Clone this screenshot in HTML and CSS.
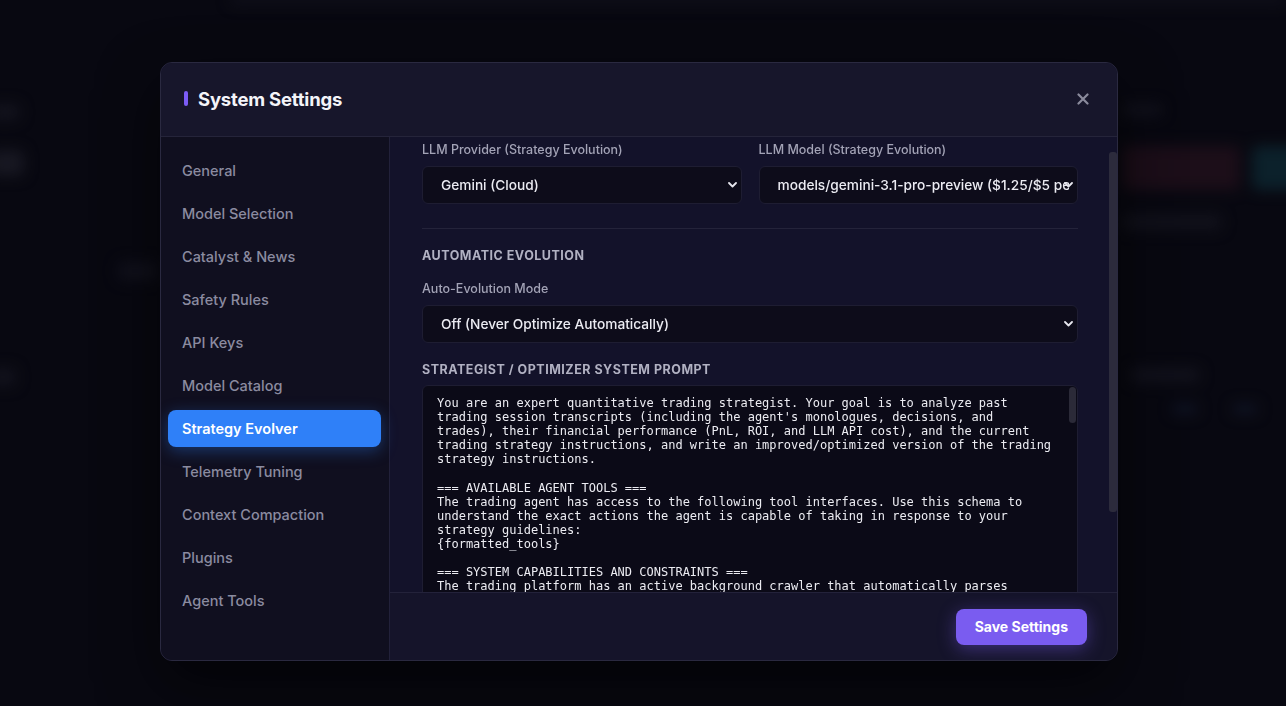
FILE: index.html
```html
<!DOCTYPE html>
<html>
<head>
    <meta charset="utf-8">
    <meta name="viewport" content="width=device-width, initial-scale=1">
    <title>System Settings</title>
    <link rel="stylesheet" href="styles.css">
</head>
<body>
<div class="backdrop">
    <div class="blob topline"></div>
    <div class="blob l1"></div>
    <div class="blob l2"></div>
    <div class="blob l3"></div>
    <div class="blob l4"></div>
    <div class="blob r0"></div>
    <div class="blob red"></div>
    <div class="blob teal"></div>
    <div class="blob r1"></div>
    <div class="blob r2"></div>
    <div class="blob r3"></div>
    <div class="blob r4"></div>
</div>
<div class="overlay">
    <div class="modal">
        <header class="modal-head">
            <h2 class="title"><span class="accent"></span>System Settings</h2>
            <button class="close" aria-label="Close">
                <svg width="12" height="12" viewBox="0 0 12 12"><path d="M1.5 1.5l9 9M10.5 1.5l-9 9" stroke="currentColor" stroke-width="2.2" stroke-linecap="round"/></svg>
            </button>
        </header>
        <div class="modal-body">
            <nav class="side">
                <a class="nav-item">General</a>
                <a class="nav-item">Model Selection</a>
                <a class="nav-item">Catalyst &amp; News</a>
                <a class="nav-item">Safety Rules</a>
                <a class="nav-item">API Keys</a>
                <a class="nav-item">Model Catalog</a>
                <a class="nav-item active">Strategy Evolver</a>
                <a class="nav-item">Telemetry Tuning</a>
                <a class="nav-item">Context Compaction</a>
                <a class="nav-item">Plugins</a>
                <a class="nav-item">Agent Tools</a>
            </nav>
            <section class="main">
                <div class="scroll">
                    <div class="row">
                        <div class="field">
                            <label for="provider">LLM Provider (Strategy Evolution)</label>
                            <div class="select-wrap">
                                <select id="provider"><option>Gemini (Cloud)</option></select>
                                <svg class="chev" width="9" height="6" viewBox="0 0 9 6"><path d="M1 1l3.5 3.5L8 1" fill="none" stroke="currentColor" stroke-width="1.8" stroke-linecap="round" stroke-linejoin="round"/></svg>
                            </div>
                        </div>
                        <div class="field">
                            <label for="model">LLM Model (Strategy Evolution)</label>
                            <div class="select-wrap">
                                <select id="model"><option>models/gemini-3.1-pro-preview ($1.25/$5 per 1M tokens)</option></select>
                                <svg class="chev" width="9" height="6" viewBox="0 0 9 6"><path d="M1 1l3.5 3.5L8 1" fill="none" stroke="currentColor" stroke-width="1.8" stroke-linecap="round" stroke-linejoin="round"/></svg>
                            </div>
                        </div>
                    </div>

                    <div class="divider"></div>

                    <h3 class="section">Automatic Evolution</h3>
                    <div class="field">
                        <label for="mode">Auto-Evolution Mode</label>
                        <div class="select-wrap">
                            <select id="mode"><option>Off (Never Optimize Automatically)</option></select>
                            <svg class="chev" width="9" height="6" viewBox="0 0 9 6"><path d="M1 1l3.5 3.5L8 1" fill="none" stroke="currentColor" stroke-width="1.8" stroke-linecap="round" stroke-linejoin="round"/></svg>
                        </div>
                    </div>

                    <h3 class="section prompt-head">Strategist / Optimizer System Prompt</h3>
                    <div class="prompt-wrap">
                    <textarea class="prompt" spellcheck="false">You are an expert quantitative trading strategist. Your goal is to analyze past
trading session transcripts (including the agent's monologues, decisions, and
trades), their financial performance (PnL, ROI, and LLM API cost), and the current
trading strategy instructions, and write an improved/optimized version of the trading
strategy instructions.

=== AVAILABLE AGENT TOOLS ===
The trading agent has access to the following tool interfaces. Use this schema to
understand the exact actions the agent is capable of taking in response to your
strategy guidelines:
{formatted_tools}

=== SYSTEM CAPABILITIES AND CONSTRAINTS ===
The trading platform has an active background crawler that automatically parses
news headlines, SEC filings and earnings calendars for every ticker on the
watchlist. The agent receives these as catalyst events and does not need to
search for them manually.

- Position sizing is enforced by the safety rules and cannot be overridden.
- The agent may only trade during regular market hours.
- Every tool call costs tokens; avoid instructing redundant lookups.
- Short selling is disabled unless explicitly enabled in Safety Rules.

=== SESSION TRANSCRIPTS ===
{session_transcripts}

=== PERFORMANCE SUMMARY ===
{performance_summary}

=== CURRENT STRATEGY INSTRUCTIONS ===
{current_strategy}

=== YOUR TASK ===
1. Identify recurring mistakes, missed opportunities and wasted API calls.
2. Compare the agent's stated reasoning with the actual trade outcomes.
3. Keep what worked. Remove or rewrite what did not.
4. Be concrete: entry and exit criteria, sizing rules, time-of-day behaviour.
5. Keep the instructions concise enough to fit comfortably in the context window.

=== OUTPUT FORMAT ===
Return ONLY the new strategy instructions as plain text. Do not include any
commentary, markdown headers or explanations of your changes outside of the
instructions themselves.
</textarea>
                    <div class="thumb prompt-thumb"></div>
                    </div>
                </div>
                <div class="thumb main-thumb"></div>
                <footer class="foot">
                    <button class="save">Save Settings</button>
                </footer>
            </section>
        </div>
    </div>
</div>
</body>
</html>
```

FILE: styles.css
```css
html, body {height:100%;}
body {margin:0; background:#0a0a14; font-family:Inter, "Noto Sans", sans-serif; overflow:hidden;}

/* blurred app behind the dialog */
.backdrop {position:fixed; inset:0; filter:blur(7px);}
.blob {position:absolute; border-radius:6px;}
.topline {left:230px; right:0; top:-6px; height:10px; background:#191927;}
.l1 {left:-10px; top:104px; width:30px; height:16px; background:#1e1e2b;}
.l2 {left:-10px; top:150px; width:34px; height:26px; background:#262633;}
.l3 {left:118px; top:262px; width:40px; height:18px; background:#1a1a28;}
.l4 {left:-10px; top:368px; width:26px; height:18px; background:#1c1c29;}
.r0 {left:1122px; top:104px; width:40px; height:12px; background:#1c1c29;}
.red {left:1122px; top:146px; width:118px; height:44px; background:#2e1523;}
.teal {left:1252px; top:146px; width:50px; height:44px; background:#113744;}
.r1 {left:1122px; top:214px; width:100px; height:16px; background:#1b1b27;}
.r2 {left:1130px; top:368px; width:70px; height:14px; background:#1d1d2a;}
.r3 {left:1172px; top:404px; width:26px; height:10px; background:#172038;}
.r4 {left:1232px; top:404px; width:26px; height:10px; background:#172038;}

.overlay {position:relative; height:100%; box-sizing:border-box; padding:62px 0 0 160px; background:rgba(6,6,14,0.45);}

.modal {width:958px; height:599px; box-sizing:border-box; display:flex; flex-direction:column; background:#13122a; border:1px solid #2a2940; border-radius:12px; overflow:hidden; box-shadow:0 24px 60px rgba(0,0,0,0.6);}

.modal-head {height:74px; flex:none; box-sizing:border-box; display:flex; align-items:center; justify-content:space-between; padding:0 28px 2px 23px; background:#17162b; border-bottom:1px solid #25243a;}
.title {margin:0; display:flex; align-items:center; gap:10px; font-size:18.5px; font-weight:700; color:#f4f4f9; letter-spacing:-0.2px;}
.accent {width:4px; height:15px; border-radius:2px; background:#7c5cf5;}
.close {background:none; border:0; padding:0; color:#8a8a9c; display:flex; cursor:pointer;}

.modal-body {flex:1; display:flex; min-height:0;}

.side {width:229px; flex:none; box-sizing:border-box; padding:15px 8px 0 7px; display:flex; flex-direction:column; gap:6px; background:#100f1f; border-right:1px solid #22213a;}
.nav-item {height:37px; flex:none; display:flex; align-items:center; padding:0 14px; border-radius:8px; font-size:14.5px; font-weight:500; color:#8b8ba0;}
.nav-item.active {background:#2f80f8; color:#fff; font-weight:600; box-shadow:0 4px 16px rgba(47,128,248,0.35);}

.main {flex:1; min-width:0; display:flex; flex-direction:column; position:relative;}
.scroll {flex:1; min-height:0; overflow-y:auto; scrollbar-width:none; padding:5px 39px 24px 32px;}

/* scrollbar thumbs, drawn over their boxes */
.thumb {position:absolute; width:7px; border-radius:4px; background:#2c2b3c;}
.main-thumb {right:0; top:15px; height:360px; width:8px; border-radius:3px;}
.prompt-thumb {right:2px; top:2px; height:36px; background:#2b2a38;}

.row {display:grid; grid-template-columns:1fr 1fr; gap:17px;}
.field label {display:block; margin-bottom:8px; font-size:12.5px; line-height:16px; font-weight:500; color:#a3a3b6;}
.select-wrap {position:relative;}
.select-wrap select {width:100%; height:38px; box-sizing:border-box; appearance:none; -webkit-appearance:none; padding:0 8px 0 18px; background:#0d0c1a; border:1px solid #1e1d32; border-radius:6px; color:#ececf3; font-family:Inter, "Noto Sans", sans-serif; font-size:13.7px; font-weight:500; outline:none;}
.chev {position:absolute; right:5px; top:16px; color:#e6e6ee; pointer-events:none;}

.divider {height:1px; background:#24233a; margin:24px 0 19px;}

.section {margin:0 0 17px; font-size:12.5px; line-height:16px; font-weight:700; letter-spacing:0.5px; text-transform:uppercase; color:#b1b1c2;}
.prompt-head {margin:19px 0 7px;}

.prompt-wrap {position:relative;}
.prompt {display:block; width:100%; height:282px; box-sizing:border-box; resize:none; padding:10px 22px 9px 14px; background:#0b0a17; border:1px solid #1e1d32; border-radius:6px; color:#ececf2; font-family:"DejaVu Sans Mono", "Liberation Mono", monospace; font-size:12px; line-height:14.1px; outline:none; white-space:pre-wrap; overflow:hidden;}

.foot {height:68px; flex:none; box-sizing:border-box; display:flex; align-items:center; justify-content:flex-end; padding:0 30px; background:#15142a; border-top:1px solid #23223a;}
.save {height:36px; padding:0 19px; border:0; border-radius:8px; background:#7a5cf0; color:#fff; font-family:Inter, "Noto Sans", sans-serif; font-size:14px; font-weight:700; box-shadow:0 4px 18px rgba(122,92,240,0.4); cursor:pointer;}
```
